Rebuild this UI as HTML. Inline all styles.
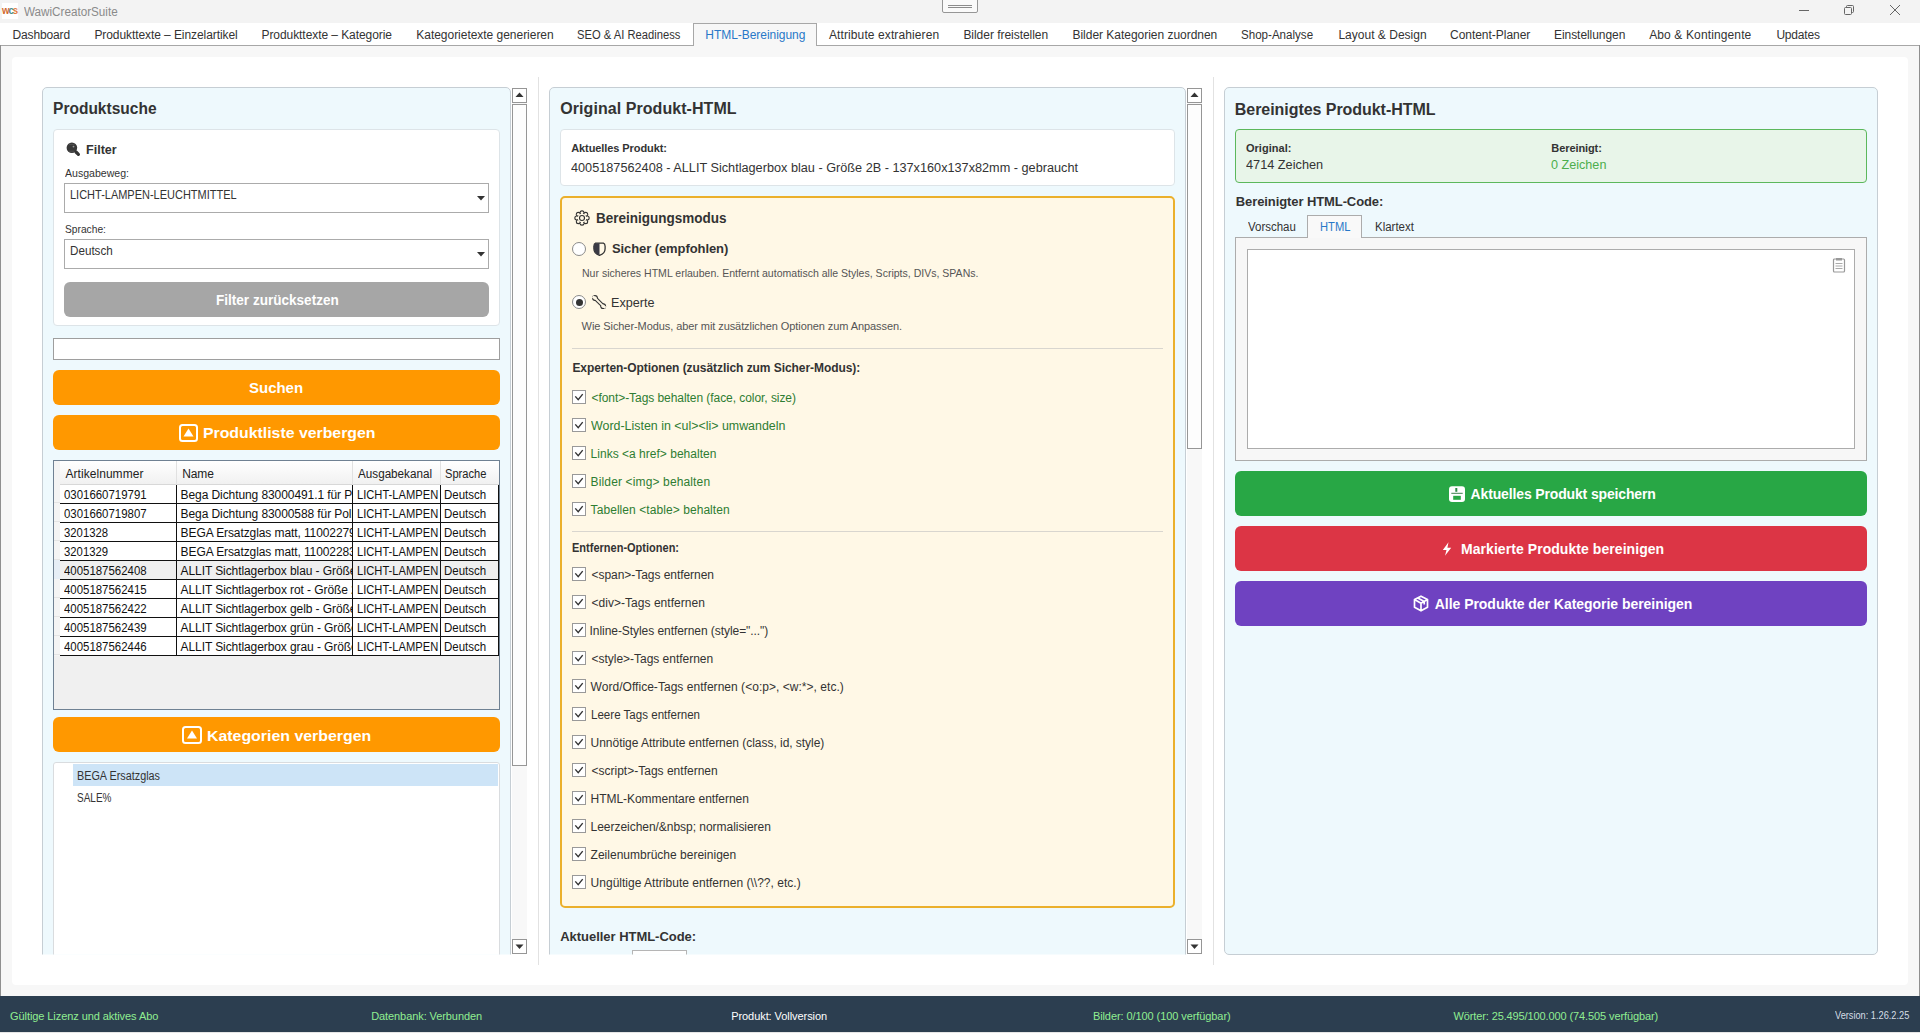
<!DOCTYPE html>
<html><head><meta charset="utf-8"><style>
html,body{margin:0;padding:0;width:1920px;height:1033px;overflow:hidden;background:#f3f3f3;font-family:'Liberation Sans', sans-serif;}
div,span,svg{position:absolute;box-sizing:border-box;}
.t{white-space:pre;}
</style></head><body>
<div style="left:0px;top:0px;width:1920px;height:23px;background:#f3f3f3"></div>
<div style="left:2px;top:3px;width:16px;height:16px;background:#fff"></div>
<span class="t" style="left:1.5px;top:2.5px;font-size:11px;line-height:14px;font-weight:700;letter-spacing:-1.2px;transform:scaleX(0.88);transform-origin:0 50%"><span style="position:static;color:#d2692e">w</span><span style="position:static;color:#4b8c8c">c</span><span style="position:static;color:#e27d3e">s</span></span>
<span class="t" style="left:24.00px;top:1.50px;font-size:12px;line-height:20px;font-weight:400;color:#8a8a8a;letter-spacing:0.000px;transform:scaleX(0.9733);transform-origin:0.00px 50%;">WawiCreatorSuite</span>
<div style="left:942px;top:-1px;width:36px;height:14px;border:1px solid #969696;background:#fafafa;border-radius:0 0 2px 2px"></div>
<div style="left:948px;top:5px;width:24px;height:1px;background:#8c8c8c"></div>
<div style="left:948px;top:7px;width:24px;height:1px;background:#8c8c8c"></div>
<div style="left:1799px;top:10px;width:10px;height:1px;background:#666"></div>
<svg style="left:1843px;top:4px" width="12" height="12" viewBox="0 0 12 12"><rect x="1.5" y="3.5" width="7" height="7" rx="1" fill="none" stroke="#666" stroke-width="1"/><path d="M3.5 3.5V2.5Q3.5 1.5 4.5 1.5H9.5Q10.5 1.5 10.5 2.5V7.5Q10.5 8.5 9.5 8.5H8.5" fill="none" stroke="#666" stroke-width="1"/></svg>
<svg style="left:1889px;top:4px" width="12" height="12" viewBox="0 0 12 12"><path d="M1 1L11 11M11 1L1 11" stroke="#666" stroke-width="1"/></svg>
<div style="left:0px;top:23px;width:1920px;height:22px;background:#fff"></div>
<div style="left:0px;top:45px;width:1920px;height:1px;background:#a7a7a7"></div>
<div style="left:693px;top:23px;width:124px;height:23px;background:#f7f7f7;border:1px solid #a7a7a7;border-bottom:none"></div>
<span class="t" style="left:12.50px;top:24.60px;font-size:12px;line-height:20px;font-weight:400;color:#333;letter-spacing:-0.141px;">Dashboard</span>
<span class="t" style="left:94.40px;top:24.60px;font-size:12px;line-height:20px;font-weight:400;color:#333;letter-spacing:-0.079px;">Produkttexte – Einzelartikel</span>
<span class="t" style="left:261.50px;top:24.60px;font-size:12px;line-height:20px;font-weight:400;color:#333;letter-spacing:-0.070px;">Produkttexte – Kategorie</span>
<span class="t" style="left:416.30px;top:24.60px;font-size:12px;line-height:20px;font-weight:400;color:#333;letter-spacing:-0.030px;">Kategorietexte generieren</span>
<span class="t" style="left:577.00px;top:24.60px;font-size:12px;line-height:20px;font-weight:400;color:#333;letter-spacing:0.000px;transform:scaleX(0.9337);transform-origin:0.00px 50%;">SEO &amp; AI Readiness</span>
<span class="t" style="left:705.30px;top:24.60px;font-size:12px;line-height:20px;font-weight:400;color:#2878c8;letter-spacing:-0.042px;">HTML-Bereinigung</span>
<span class="t" style="left:829.00px;top:24.60px;font-size:12px;line-height:20px;font-weight:400;color:#333;letter-spacing:0.101px;">Attribute extrahieren</span>
<span class="t" style="left:963.40px;top:24.60px;font-size:12px;line-height:20px;font-weight:400;color:#333;letter-spacing:-0.035px;">Bilder freistellen</span>
<span class="t" style="left:1072.50px;top:24.60px;font-size:12px;line-height:20px;font-weight:400;color:#333;letter-spacing:-0.026px;">Bilder Kategorien zuordnen</span>
<span class="t" style="left:1241.00px;top:24.60px;font-size:12px;line-height:20px;font-weight:400;color:#333;letter-spacing:0.000px;transform:scaleX(0.9648);transform-origin:0.00px 50%;">Shop-Analyse</span>
<span class="t" style="left:1338.40px;top:24.60px;font-size:12px;line-height:20px;font-weight:400;color:#333;letter-spacing:0.016px;">Layout &amp; Design</span>
<span class="t" style="left:1450.00px;top:24.60px;font-size:12px;line-height:20px;font-weight:400;color:#333;letter-spacing:-0.032px;">Content-Planer</span>
<span class="t" style="left:1554.00px;top:24.60px;font-size:12px;line-height:20px;font-weight:400;color:#333;letter-spacing:-0.057px;">Einstellungen</span>
<span class="t" style="left:1649.20px;top:24.60px;font-size:12px;line-height:20px;font-weight:400;color:#333;letter-spacing:0.125px;">Abo &amp; Kontingente</span>
<span class="t" style="left:1776.40px;top:24.60px;font-size:12px;line-height:20px;font-weight:400;color:#333;letter-spacing:-0.183px;">Updates</span>
<div style="left:0px;top:46px;width:1920px;height:950px;background:#f7f7f7"></div>
<div style="left:0px;top:45px;width:1px;height:951px;background:#8f8f8f"></div>
<div style="left:1919px;top:45px;width:1px;height:951px;background:#8f8f8f"></div>
<div style="left:12px;top:57px;width:1896px;height:928px;background:#fff;border-radius:4px"></div>
<div style="left:538px;top:77px;width:1px;height:888px;background:#e2e2e2"></div>
<div style="left:1213px;top:77px;width:1px;height:888px;background:#e2e2e2"></div>
<div style="left:0px;top:996px;width:1920px;height:36px;background:#2c3e50"></div>
<div style="left:0px;top:1032px;width:1920px;height:1px;background:#e6e6e6"></div>
<span class="t" style="left:10.00px;top:1006.20px;font-size:11px;line-height:20px;font-weight:400;color:#90ee90;letter-spacing:-0.073px;">Gültige Lizenz und aktives Abo</span>
<span class="t" style="left:371.20px;top:1006.20px;font-size:11px;line-height:20px;font-weight:400;color:#90ee90;letter-spacing:-0.085px;">Datenbank: Verbunden</span>
<span class="t" style="left:731.20px;top:1006.20px;font-size:11px;line-height:20px;font-weight:400;color:#ffffff;letter-spacing:-0.068px;">Produkt: Vollversion</span>
<span class="t" style="left:1092.90px;top:1006.20px;font-size:11px;line-height:20px;font-weight:400;color:#90ee90;letter-spacing:-0.081px;">Bilder: 0/100 (100 verfügbar)</span>
<span class="t" style="left:1453.40px;top:1006.20px;font-size:11px;line-height:20px;font-weight:400;color:#90ee90;letter-spacing:-0.109px;">Wörter: 25.495/100.000 (74.505 verfügbar)</span>
<span class="t" style="left:1835.00px;top:1005.50px;font-size:10px;line-height:20px;font-weight:400;color:#d5dde5;letter-spacing:0.000px;transform:scaleX(0.9216);transform-origin:0.00px 50%;">Version: 1.26.2.25</span>
<div style="left:0;top:0;width:1920px;height:1033px;clip-path:inset(57px 1382px 78.5px 12px)">
<div style="left:42px;top:87px;width:469px;height:1000px;background:#eef9fd;border:1px solid #c6ced4;border-radius:5px"></div>
<span class="t" style="left:52.50px;top:99.30px;font-size:16px;line-height:20px;font-weight:700;color:#333;letter-spacing:0.000px;transform:scaleX(0.9699);transform-origin:1.00px 50%;">Produktsuche</span>
<div style="left:53px;top:129px;width:447px;height:197px;background:#fff;border:1px solid #dde4e8;border-radius:4px"></div>
<svg style="left:65px;top:142px" width="16" height="16" viewBox="0 0 16 16"><circle cx="6.9" cy="5.8" r="5.3" fill="#383838"/><circle cx="8.5" cy="4.6" r="0.9" fill="#999"/><path d="M3.8 2.4H9.5M3.8 9.2H9.5" stroke="#555" stroke-width="0.8"/><path d="M11 10L13.4 12.4" stroke="#333" stroke-width="3.2" stroke-linecap="round"/></svg>
<span class="t" style="left:86.00px;top:140.10px;font-size:13px;line-height:20px;font-weight:700;color:#333;letter-spacing:0.000px;transform:scaleX(0.9677);transform-origin:0.00px 50%;">Filter</span>
<span class="t" style="left:64.60px;top:163.00px;font-size:11px;line-height:20px;font-weight:400;color:#333;letter-spacing:0.000px;transform:scaleX(0.9609);transform-origin:0.00px 50%;">Ausgabeweg:</span>
<div style="left:64px;top:183px;width:425px;height:30px;background:#fff;border:1px solid #ababab"></div>
<span class="t" style="left:69.60px;top:185.40px;font-size:12px;line-height:20px;font-weight:400;color:#333;letter-spacing:0.000px;transform:scaleX(0.9153);transform-origin:0.00px 50%;">LICHT-LAMPEN-LEUCHTMITTEL</span>
<svg style="left:477px;top:196px" width="8" height="5" viewBox="0 0 8 5"><path d="M0 0H8L4 4.5Z" fill="#333"/></svg>
<span class="t" style="left:64.60px;top:219.00px;font-size:11px;line-height:20px;font-weight:400;color:#333;letter-spacing:0.000px;transform:scaleX(0.9302);transform-origin:0.00px 50%;">Sprache:</span>
<div style="left:64px;top:239px;width:425px;height:30px;background:#fff;border:1px solid #ababab"></div>
<span class="t" style="left:69.60px;top:241.40px;font-size:12px;line-height:20px;font-weight:400;color:#333;letter-spacing:0.000px;transform:scaleX(0.9712);transform-origin:0.00px 50%;">Deutsch</span>
<svg style="left:477px;top:252px" width="8" height="5" viewBox="0 0 8 5"><path d="M0 0H8L4 4.5Z" fill="#333"/></svg>
<div style="left:64px;top:282px;width:425px;height:35px;background:#a6a6a6;border-radius:6px"></div>
<span class="t" style="left:215.90px;top:290.00px;font-size:14px;line-height:20px;font-weight:700;color:#fff;letter-spacing:0.000px;transform:scaleX(0.9678);transform-origin:0.00px 50%;">Filter zurücksetzen</span>
<div style="left:53px;top:338px;width:447px;height:22px;background:#fff;border:1px solid #9e9e9e"></div>
<div style="left:53px;top:370px;width:447px;height:35px;background:#ff9800;border-radius:6px"></div>
<span class="t" style="left:249.10px;top:378.40px;font-size:15px;line-height:20px;font-weight:700;color:#fff;letter-spacing:-0.043px;">Suchen</span>
<div style="left:53px;top:415px;width:447px;height:35px;background:#ff9800;border-radius:6px"></div>
<svg style="left:179px;top:424px" width="19" height="18" viewBox="0 0 19 18"><rect x="1" y="1" width="17" height="16" rx="2.5" fill="none" stroke="#fff" stroke-width="2"/><path d="M9.5 4.5L14.5 12.5H4.5Z" fill="#fff"/></svg>
<span class="t" style="left:203.40px;top:423.20px;font-size:15px;line-height:20px;font-weight:700;color:#fff;letter-spacing:0.000px;transform:scaleX(1.0560);transform-origin:1.00px 50%;">Produktliste verbergen</span>
<div style="left:53px;top:460px;width:447px;height:250px;background:#f0f0f0;border:1px solid #6f8193"></div>
<div style="left:54px;top:461px;width:6px;height:195px;background:#f4f4f4"></div>
<div style="left:60px;top:461px;width:439px;height:24px;background:linear-gradient(#ffffff,#f1f1f1);border-bottom:1px solid #d8d8d8"></div>
<div style="left:176px;top:461px;width:1px;height:24px;background:#e1e1e1"></div>
<div style="left:352px;top:461px;width:1px;height:24px;background:#e1e1e1"></div>
<div style="left:440px;top:461px;width:1px;height:24px;background:#e1e1e1"></div>
<span class="t" style="left:65.50px;top:463.50px;font-size:12px;line-height:20px;font-weight:400;color:#222;letter-spacing:0.046px;">Artikelnummer</span>
<span class="t" style="left:182.30px;top:463.50px;font-size:12px;line-height:20px;font-weight:400;color:#222;letter-spacing:-0.162px;">Name</span>
<span class="t" style="left:358.40px;top:463.50px;font-size:12px;line-height:20px;font-weight:400;color:#222;letter-spacing:0.000px;transform:scaleX(0.9735);transform-origin:0.00px 50%;">Ausgabekanal</span>
<span class="t" style="left:445.30px;top:463.50px;font-size:12px;line-height:20px;font-weight:400;color:#222;letter-spacing:0.000px;transform:scaleX(0.9262);transform-origin:0.00px 50%;">Sprache</span>
<div style="left:60px;top:485px;width:439px;height:18px;background:#fff"></div>
<div style="left:54px;top:502px;width:6px;height:1px;background:#e4e4e4"></div>
<div style="left:60px;top:503px;width:439px;height:1px;background:#111"></div>
<span class="t" style="left:63.50px;top:485.40px;font-size:12px;line-height:20px;font-weight:400;color:#111;letter-spacing:0.000px;transform:scaleX(0.9519);transform-origin:0.00px 50%;">0301660719791</span>
<span class="t" style="left:356.70px;top:485.40px;font-size:12px;line-height:20px;font-weight:400;color:#111;letter-spacing:0.000px;transform:scaleX(0.9298);transform-origin:0.00px 50%;">LICHT-LAMPEN</span>
<span class="t" style="left:443.80px;top:485.40px;font-size:12px;line-height:20px;font-weight:400;color:#111;letter-spacing:0.000px;transform:scaleX(0.9574);transform-origin:0.00px 50%;">Deutsch</span>
<div style="left:0;top:0;width:1920px;height:1033px;clip-path:inset(0 1568px 0 177px)">
<span class="t" style="left:180.60px;top:485.40px;font-size:12px;line-height:20px;font-weight:400;color:#111;letter-spacing:-0.086px;">Bega Dichtung 83000491.1 für Pollerleuchte</span>
</div>
<div style="left:60px;top:504px;width:439px;height:18px;background:#fff"></div>
<div style="left:54px;top:521px;width:6px;height:1px;background:#e4e4e4"></div>
<div style="left:60px;top:522px;width:439px;height:1px;background:#111"></div>
<span class="t" style="left:63.50px;top:504.40px;font-size:12px;line-height:20px;font-weight:400;color:#111;letter-spacing:0.000px;transform:scaleX(0.9519);transform-origin:0.00px 50%;">0301660719807</span>
<span class="t" style="left:356.70px;top:504.40px;font-size:12px;line-height:20px;font-weight:400;color:#111;letter-spacing:0.000px;transform:scaleX(0.9298);transform-origin:0.00px 50%;">LICHT-LAMPEN</span>
<span class="t" style="left:443.80px;top:504.40px;font-size:12px;line-height:20px;font-weight:400;color:#111;letter-spacing:0.000px;transform:scaleX(0.9574);transform-origin:0.00px 50%;">Deutsch</span>
<div style="left:0;top:0;width:1920px;height:1033px;clip-path:inset(0 1568px 0 177px)">
<span class="t" style="left:180.60px;top:504.40px;font-size:12px;line-height:20px;font-weight:400;color:#111;letter-spacing:-0.087px;">Bega Dichtung 83000588 für Pollerleuchte</span>
</div>
<div style="left:60px;top:523px;width:439px;height:18px;background:#fff"></div>
<div style="left:54px;top:540px;width:6px;height:1px;background:#e4e4e4"></div>
<div style="left:60px;top:541px;width:439px;height:1px;background:#111"></div>
<span class="t" style="left:63.50px;top:523.40px;font-size:12px;line-height:20px;font-weight:400;color:#111;letter-spacing:0.000px;transform:scaleX(0.9438);transform-origin:0.00px 50%;">3201328</span>
<span class="t" style="left:356.70px;top:523.40px;font-size:12px;line-height:20px;font-weight:400;color:#111;letter-spacing:0.000px;transform:scaleX(0.9298);transform-origin:0.00px 50%;">LICHT-LAMPEN</span>
<span class="t" style="left:443.80px;top:523.40px;font-size:12px;line-height:20px;font-weight:400;color:#111;letter-spacing:0.000px;transform:scaleX(0.9574);transform-origin:0.00px 50%;">Deutsch</span>
<div style="left:0;top:0;width:1920px;height:1033px;clip-path:inset(0 1568px 0 177px)">
<span class="t" style="left:180.60px;top:523.40px;font-size:12px;line-height:20px;font-weight:400;color:#111;letter-spacing:-0.093px;">BEGA Ersatzglas matt, 11002279</span>
</div>
<div style="left:60px;top:542px;width:439px;height:18px;background:#fff"></div>
<div style="left:54px;top:559px;width:6px;height:1px;background:#e4e4e4"></div>
<div style="left:60px;top:560px;width:439px;height:1px;background:#111"></div>
<span class="t" style="left:63.50px;top:542.40px;font-size:12px;line-height:20px;font-weight:400;color:#111;letter-spacing:0.000px;transform:scaleX(0.9438);transform-origin:0.00px 50%;">3201329</span>
<span class="t" style="left:356.70px;top:542.40px;font-size:12px;line-height:20px;font-weight:400;color:#111;letter-spacing:0.000px;transform:scaleX(0.9298);transform-origin:0.00px 50%;">LICHT-LAMPEN</span>
<span class="t" style="left:443.80px;top:542.40px;font-size:12px;line-height:20px;font-weight:400;color:#111;letter-spacing:0.000px;transform:scaleX(0.9574);transform-origin:0.00px 50%;">Deutsch</span>
<div style="left:0;top:0;width:1920px;height:1033px;clip-path:inset(0 1568px 0 177px)">
<span class="t" style="left:180.60px;top:542.40px;font-size:12px;line-height:20px;font-weight:400;color:#111;letter-spacing:-0.093px;">BEGA Ersatzglas matt, 11002283</span>
</div>
<div style="left:60px;top:561px;width:439px;height:18px;background:#efefef"></div>
<div style="left:54px;top:578px;width:6px;height:1px;background:#e4e4e4"></div>
<div style="left:60px;top:579px;width:439px;height:1px;background:#111"></div>
<span class="t" style="left:63.50px;top:561.40px;font-size:12px;line-height:20px;font-weight:400;color:#111;letter-spacing:0.000px;transform:scaleX(0.9519);transform-origin:0.00px 50%;">4005187562408</span>
<span class="t" style="left:356.70px;top:561.40px;font-size:12px;line-height:20px;font-weight:400;color:#111;letter-spacing:0.000px;transform:scaleX(0.9298);transform-origin:0.00px 50%;">LICHT-LAMPEN</span>
<span class="t" style="left:443.80px;top:561.40px;font-size:12px;line-height:20px;font-weight:400;color:#111;letter-spacing:0.000px;transform:scaleX(0.9574);transform-origin:0.00px 50%;">Deutsch</span>
<div style="left:0;top:0;width:1920px;height:1033px;clip-path:inset(0 1568px 0 177px)">
<span class="t" style="left:180.60px;top:561.40px;font-size:12px;line-height:20px;font-weight:400;color:#111;letter-spacing:-0.087px;">ALLIT Sichtlagerbox blau - Größe 2B</span>
</div>
<div style="left:60px;top:580px;width:439px;height:18px;background:#fff"></div>
<div style="left:54px;top:597px;width:6px;height:1px;background:#e4e4e4"></div>
<div style="left:60px;top:598px;width:439px;height:1px;background:#111"></div>
<span class="t" style="left:63.50px;top:580.40px;font-size:12px;line-height:20px;font-weight:400;color:#111;letter-spacing:0.000px;transform:scaleX(0.9519);transform-origin:0.00px 50%;">4005187562415</span>
<span class="t" style="left:356.70px;top:580.40px;font-size:12px;line-height:20px;font-weight:400;color:#111;letter-spacing:0.000px;transform:scaleX(0.9298);transform-origin:0.00px 50%;">LICHT-LAMPEN</span>
<span class="t" style="left:443.80px;top:580.40px;font-size:12px;line-height:20px;font-weight:400;color:#111;letter-spacing:0.000px;transform:scaleX(0.9574);transform-origin:0.00px 50%;">Deutsch</span>
<div style="left:0;top:0;width:1920px;height:1033px;clip-path:inset(0 1568px 0 177px)">
<span class="t" style="left:180.60px;top:580.40px;font-size:12px;line-height:20px;font-weight:400;color:#111;letter-spacing:-0.085px;">ALLIT Sichtlagerbox rot - Größe 2B</span>
</div>
<div style="left:60px;top:599px;width:439px;height:18px;background:#fff"></div>
<div style="left:54px;top:616px;width:6px;height:1px;background:#e4e4e4"></div>
<div style="left:60px;top:617px;width:439px;height:1px;background:#111"></div>
<span class="t" style="left:63.50px;top:599.40px;font-size:12px;line-height:20px;font-weight:400;color:#111;letter-spacing:0.000px;transform:scaleX(0.9519);transform-origin:0.00px 50%;">4005187562422</span>
<span class="t" style="left:356.70px;top:599.40px;font-size:12px;line-height:20px;font-weight:400;color:#111;letter-spacing:0.000px;transform:scaleX(0.9298);transform-origin:0.00px 50%;">LICHT-LAMPEN</span>
<span class="t" style="left:443.80px;top:599.40px;font-size:12px;line-height:20px;font-weight:400;color:#111;letter-spacing:0.000px;transform:scaleX(0.9574);transform-origin:0.00px 50%;">Deutsch</span>
<div style="left:0;top:0;width:1920px;height:1033px;clip-path:inset(0 1568px 0 177px)">
<span class="t" style="left:180.60px;top:599.40px;font-size:12px;line-height:20px;font-weight:400;color:#111;letter-spacing:-0.087px;">ALLIT Sichtlagerbox gelb - Größe 2B</span>
</div>
<div style="left:60px;top:618px;width:439px;height:18px;background:#fff"></div>
<div style="left:54px;top:635px;width:6px;height:1px;background:#e4e4e4"></div>
<div style="left:60px;top:636px;width:439px;height:1px;background:#111"></div>
<span class="t" style="left:63.50px;top:618.40px;font-size:12px;line-height:20px;font-weight:400;color:#111;letter-spacing:0.000px;transform:scaleX(0.9519);transform-origin:0.00px 50%;">4005187562439</span>
<span class="t" style="left:356.70px;top:618.40px;font-size:12px;line-height:20px;font-weight:400;color:#111;letter-spacing:0.000px;transform:scaleX(0.9298);transform-origin:0.00px 50%;">LICHT-LAMPEN</span>
<span class="t" style="left:443.80px;top:618.40px;font-size:12px;line-height:20px;font-weight:400;color:#111;letter-spacing:0.000px;transform:scaleX(0.9574);transform-origin:0.00px 50%;">Deutsch</span>
<div style="left:0;top:0;width:1920px;height:1033px;clip-path:inset(0 1568px 0 177px)">
<span class="t" style="left:180.60px;top:618.40px;font-size:12px;line-height:20px;font-weight:400;color:#111;letter-spacing:-0.087px;">ALLIT Sichtlagerbox grün - Größe 2B</span>
</div>
<div style="left:60px;top:637px;width:439px;height:18px;background:#fff"></div>
<div style="left:54px;top:654px;width:6px;height:1px;background:#e4e4e4"></div>
<div style="left:60px;top:655px;width:439px;height:1px;background:#111"></div>
<span class="t" style="left:63.50px;top:637.40px;font-size:12px;line-height:20px;font-weight:400;color:#111;letter-spacing:0.000px;transform:scaleX(0.9519);transform-origin:0.00px 50%;">4005187562446</span>
<span class="t" style="left:356.70px;top:637.40px;font-size:12px;line-height:20px;font-weight:400;color:#111;letter-spacing:0.000px;transform:scaleX(0.9298);transform-origin:0.00px 50%;">LICHT-LAMPEN</span>
<span class="t" style="left:443.80px;top:637.40px;font-size:12px;line-height:20px;font-weight:400;color:#111;letter-spacing:0.000px;transform:scaleX(0.9574);transform-origin:0.00px 50%;">Deutsch</span>
<div style="left:0;top:0;width:1920px;height:1033px;clip-path:inset(0 1568px 0 177px)">
<span class="t" style="left:180.60px;top:637.40px;font-size:12px;line-height:20px;font-weight:400;color:#111;letter-spacing:-0.087px;">ALLIT Sichtlagerbox grau - Größe 2B</span>
</div>
<div style="left:54px;top:560px;width:6px;height:19px;background:#e6eef6"></div>
<div style="left:176px;top:485px;width:1px;height:171px;background:#111"></div>
<div style="left:352px;top:485px;width:1px;height:171px;background:#111"></div>
<div style="left:440px;top:485px;width:1px;height:171px;background:#111"></div>
<div style="left:498px;top:485px;width:1px;height:171px;background:#111"></div>
<div style="left:53px;top:717px;width:447px;height:35px;background:#ff9800;border-radius:6px"></div>
<svg style="left:182px;top:726px" width="20" height="18" viewBox="0 0 20 18"><rect x="1" y="1" width="18" height="16" rx="2.5" fill="none" stroke="#fff" stroke-width="2"/><path d="M10 4.5L15 12.5H5Z" fill="#fff"/></svg>
<span class="t" style="left:207.20px;top:725.90px;font-size:15px;line-height:20px;font-weight:700;color:#fff;letter-spacing:0.000px;transform:scaleX(1.0599);transform-origin:1.00px 50%;">Kategorien verbergen</span>
<div style="left:53px;top:762px;width:447px;height:400px;background:#fff;border:1px solid #d9dcdf;border-radius:3px"></div>
<div style="left:73px;top:764px;width:425px;height:22px;background:#cde4f7"></div>
<span class="t" style="left:76.60px;top:765.60px;font-size:12px;line-height:20px;font-weight:400;color:#333;letter-spacing:0.000px;transform:scaleX(0.9018);transform-origin:0.00px 50%;">BEGA Ersatzglas</span>
<span class="t" style="left:76.60px;top:787.60px;font-size:12px;line-height:20px;font-weight:400;color:#333;letter-spacing:0.000px;transform:scaleX(0.8324);transform-origin:0.00px 50%;">SALE%</span>
</div>
<div style="left:512px;top:88px;width:15px;height:866px;background:#f8f8f8"></div>
<div style="left:512px;top:88px;width:15px;height:15px;background:#fff;border:1px solid #969696"></div>
<svg style="left:515px;top:92px" width="9" height="6" viewBox="0 0 9 6"><path d="M0.5 5H8.5L4.5 0.5Z" fill="#333"/></svg>
<div style="left:512px;top:104px;width:15px;height:662px;background:#fdfdfd;border:1px solid #969696"></div>
<div style="left:512px;top:939px;width:15px;height:15px;background:#fff;border:1px solid #969696"></div>
<svg style="left:515px;top:944px" width="9" height="6" viewBox="0 0 9 6"><path d="M0.5 0.5H8.5L4.5 5Z" fill="#333"/></svg>
<div style="left:0;top:0;width:1920px;height:1033px;clip-path:inset(57px 734px 78.5px 539px)">
<div style="left:549px;top:87px;width:637px;height:1000px;background:#eef9fd;border:1px solid #c6ced4;border-radius:5px"></div>
<span class="t" style="left:560.30px;top:99.20px;font-size:16px;line-height:20px;font-weight:700;color:#333;letter-spacing:0.059px;">Original Produkt-HTML</span>
<div style="left:560px;top:129px;width:615px;height:57px;background:#fff;border:1px solid #dde4e8;border-radius:4px"></div>
<span class="t" style="left:571.20px;top:138.20px;font-size:11px;line-height:20px;font-weight:700;color:#333;letter-spacing:-0.084px;">Aktuelles Produkt:</span>
<span class="t" style="left:571.20px;top:157.60px;font-size:12px;line-height:20px;font-weight:400;color:#333;letter-spacing:0.000px;transform:scaleX(1.0575);transform-origin:0.00px 50%;">4005187562408 - ALLIT Sichtlagerbox blau - Größe 2B - 137x160x137x82mm - gebraucht</span>
<div style="left:560px;top:196px;width:615px;height:712px;background:#fff8e6;border:2px solid #ebb02c;border-radius:5px"></div>
<svg style="left:574px;top:210px" width="16" height="16" viewBox="0 0 16 16"><circle cx="8" cy="8" r="5.4" fill="#333"/><circle cx="13.20" cy="8.00" r="2.5" fill="#333"/><circle cx="11.68" cy="11.68" r="2.5" fill="#333"/><circle cx="8.00" cy="13.20" r="2.5" fill="#333"/><circle cx="4.32" cy="11.68" r="2.5" fill="#333"/><circle cx="2.80" cy="8.00" r="2.5" fill="#333"/><circle cx="4.32" cy="4.32" r="2.5" fill="#333"/><circle cx="8.00" cy="2.80" r="2.5" fill="#333"/><circle cx="11.68" cy="4.32" r="2.5" fill="#333"/><circle cx="8" cy="8" r="4.3" fill="#fff8e6"/><circle cx="13.20" cy="8.00" r="1.4" fill="#fff8e6"/><circle cx="11.68" cy="11.68" r="1.4" fill="#fff8e6"/><circle cx="8.00" cy="13.20" r="1.4" fill="#fff8e6"/><circle cx="4.32" cy="11.68" r="1.4" fill="#fff8e6"/><circle cx="2.80" cy="8.00" r="1.4" fill="#fff8e6"/><circle cx="4.32" cy="4.32" r="1.4" fill="#fff8e6"/><circle cx="8.00" cy="2.80" r="1.4" fill="#fff8e6"/><circle cx="11.68" cy="4.32" r="1.4" fill="#fff8e6"/><circle cx="8" cy="8" r="2.5" fill="none" stroke="#333" stroke-width="1.1"/></svg>
<span class="t" style="left:595.90px;top:208.20px;font-size:14px;line-height:20px;font-weight:700;color:#333;letter-spacing:0.000px;transform:scaleX(0.9634);transform-origin:0.00px 50%;">Bereinigungsmodus</span>
<div style="left:572px;top:242px;width:14px;height:14px;background:#fff;border:1px solid #8a8a8a;border-radius:50%"></div>
<svg style="left:593px;top:242px" width="13" height="14" viewBox="0 0 13 14"><path d="M2.6 1.2H10.4Q12 1.8 12.1 4.2V6.8C12.1 10 9.6 12.4 6.5 13.3C3.4 12.4 0.9 10 0.9 6.8V4.2Q1 1.8 2.6 1.2Z" fill="none" stroke="#333" stroke-width="1.3"/><path d="M6.5 1.2H2.6Q1 1.8 0.9 4.2V6.8C0.9 10 3.4 12.4 6.5 13.3Z" fill="#3a3a44"/></svg>
<span class="t" style="left:612.00px;top:238.90px;font-size:13px;line-height:20px;font-weight:700;color:#333;letter-spacing:-0.089px;">Sicher (empfohlen)</span>
<span class="t" style="left:581.60px;top:263.10px;font-size:11px;line-height:20px;font-weight:400;color:#555;letter-spacing:0.000px;transform:scaleX(0.9579);transform-origin:0.00px 50%;">Nur sicheres HTML erlauben. Entfernt automatisch alle Styles, Scripts, DIVs, SPANs.</span>
<div style="left:572px;top:295px;width:14px;height:14px;background:#fff;border:1px solid #8a8a8a;border-radius:50%"></div>
<div style="left:575.5px;top:298.5px;width:7px;height:7px;background:#333;border-radius:50%"></div>
<svg style="left:591px;top:294px" width="16" height="16" viewBox="0 0 16 16"><g fill="#333"><circle cx="4" cy="4" r="2.9"/><circle cx="12.2" cy="12.2" r="2.9"/></g><path d="M4 4L12.2 12.2" stroke="#333" stroke-width="4"/><g fill="#fff8e6"><circle cx="4" cy="4" r="1.8"/><circle cx="12.2" cy="12.2" r="1.8"/></g><path d="M4 4L12.2 12.2" stroke="#fff8e6" stroke-width="1.9"/><path d="M0.8 3.2L2.6 1.4L4.2 3L2.4 4.8Z M15.4 13L13.6 14.8L12 13.2L13.8 11.4Z" fill="#fff8e6"/></svg>
<span class="t" style="left:611.00px;top:292.70px;font-size:13px;line-height:20px;font-weight:400;color:#333;letter-spacing:0.000px;transform:scaleX(0.9685);transform-origin:1.00px 50%;">Experte</span>
<span class="t" style="left:581.60px;top:316.00px;font-size:11px;line-height:20px;font-weight:400;color:#555;letter-spacing:-0.079px;">Wie Sicher-Modus, aber mit zusätzlichen Optionen zum Anpassen.</span>
<div style="left:572px;top:348px;width:591px;height:1px;background:#d9d6cf"></div>
<span class="t" style="left:572.40px;top:357.50px;font-size:12px;line-height:20px;font-weight:700;color:#333;letter-spacing:-0.059px;">Experten-Optionen (zusätzlich zum Sicher-Modus):</span>
<svg style="left:572px;top:390px" width="14" height="14" viewBox="0 0 14 14"><rect x="0.5" y="0.5" width="13" height="13" fill="#fff" stroke="#999"/><path d="M3.3 6.4L6.2 9.6L10.7 4.1" fill="none" stroke="#333" stroke-width="1.4"/></svg>
<span class="t" style="left:591.50px;top:388.00px;font-size:12px;line-height:20px;font-weight:400;color:#2e7d32;letter-spacing:-0.059px;">&lt;font&gt;-Tags behalten (face, color, size)</span>
<svg style="left:572px;top:418px" width="14" height="14" viewBox="0 0 14 14"><rect x="0.5" y="0.5" width="13" height="13" fill="#fff" stroke="#999"/><path d="M3.3 6.4L6.2 9.6L10.7 4.1" fill="none" stroke="#333" stroke-width="1.4"/></svg>
<span class="t" style="left:590.60px;top:416.00px;font-size:12px;line-height:20px;font-weight:400;color:#2e7d32;letter-spacing:0.000px;transform:scaleX(1.0347);transform-origin:0.00px 50%;">Word-Listen in &lt;ul&gt;&lt;li&gt; umwandeln</span>
<svg style="left:572px;top:446px" width="14" height="14" viewBox="0 0 14 14"><rect x="0.5" y="0.5" width="13" height="13" fill="#fff" stroke="#999"/><path d="M3.3 6.4L6.2 9.6L10.7 4.1" fill="none" stroke="#333" stroke-width="1.4"/></svg>
<span class="t" style="left:590.60px;top:444.00px;font-size:12px;line-height:20px;font-weight:400;color:#2e7d32;letter-spacing:0.016px;">Links &lt;a href&gt; behalten</span>
<svg style="left:572px;top:474px" width="14" height="14" viewBox="0 0 14 14"><rect x="0.5" y="0.5" width="13" height="13" fill="#fff" stroke="#999"/><path d="M3.3 6.4L6.2 9.6L10.7 4.1" fill="none" stroke="#333" stroke-width="1.4"/></svg>
<span class="t" style="left:590.60px;top:472.00px;font-size:12px;line-height:20px;font-weight:400;color:#2e7d32;letter-spacing:0.137px;">Bilder &lt;img&gt; behalten</span>
<svg style="left:572px;top:502px" width="14" height="14" viewBox="0 0 14 14"><rect x="0.5" y="0.5" width="13" height="13" fill="#fff" stroke="#999"/><path d="M3.3 6.4L6.2 9.6L10.7 4.1" fill="none" stroke="#333" stroke-width="1.4"/></svg>
<span class="t" style="left:590.60px;top:500.00px;font-size:12px;line-height:20px;font-weight:400;color:#2e7d32;letter-spacing:0.068px;">Tabellen &lt;table&gt; behalten</span>
<div style="left:572px;top:531px;width:591px;height:1px;background:#d9d6cf"></div>
<span class="t" style="left:572.40px;top:538.20px;font-size:12px;line-height:20px;font-weight:700;color:#333;letter-spacing:0.000px;transform:scaleX(0.9174);transform-origin:0.00px 50%;">Entfernen-Optionen:</span>
<svg style="left:572px;top:567px" width="14" height="14" viewBox="0 0 14 14"><rect x="0.5" y="0.5" width="13" height="13" fill="#fff" stroke="#999"/><path d="M3.3 6.4L6.2 9.6L10.7 4.1" fill="none" stroke="#333" stroke-width="1.4"/></svg>
<span class="t" style="left:591.50px;top:565.00px;font-size:12px;line-height:20px;font-weight:400;color:#333;letter-spacing:-0.047px;">&lt;span&gt;-Tags entfernen</span>
<svg style="left:572px;top:595px" width="14" height="14" viewBox="0 0 14 14"><rect x="0.5" y="0.5" width="13" height="13" fill="#fff" stroke="#999"/><path d="M3.3 6.4L6.2 9.6L10.7 4.1" fill="none" stroke="#333" stroke-width="1.4"/></svg>
<span class="t" style="left:591.50px;top:593.00px;font-size:12px;line-height:20px;font-weight:400;color:#333;letter-spacing:0.033px;">&lt;div&gt;-Tags entfernen</span>
<svg style="left:572px;top:623px" width="14" height="14" viewBox="0 0 14 14"><rect x="0.5" y="0.5" width="13" height="13" fill="#fff" stroke="#999"/><path d="M3.3 6.4L6.2 9.6L10.7 4.1" fill="none" stroke="#333" stroke-width="1.4"/></svg>
<span class="t" style="left:589.60px;top:621.00px;font-size:12px;line-height:20px;font-weight:400;color:#333;letter-spacing:-0.062px;">Inline-Styles entfernen (style=&quot;...&quot;)</span>
<svg style="left:572px;top:651px" width="14" height="14" viewBox="0 0 14 14"><rect x="0.5" y="0.5" width="13" height="13" fill="#fff" stroke="#999"/><path d="M3.3 6.4L6.2 9.6L10.7 4.1" fill="none" stroke="#333" stroke-width="1.4"/></svg>
<span class="t" style="left:591.50px;top:649.00px;font-size:12px;line-height:20px;font-weight:400;color:#333;letter-spacing:-0.019px;">&lt;style&gt;-Tags entfernen</span>
<svg style="left:572px;top:679px" width="14" height="14" viewBox="0 0 14 14"><rect x="0.5" y="0.5" width="13" height="13" fill="#fff" stroke="#999"/><path d="M3.3 6.4L6.2 9.6L10.7 4.1" fill="none" stroke="#333" stroke-width="1.4"/></svg>
<span class="t" style="left:590.60px;top:677.00px;font-size:12px;line-height:20px;font-weight:400;color:#333;letter-spacing:0.033px;">Word/Office-Tags entfernen (&lt;o:p&gt;, &lt;w:*&gt;, etc.)</span>
<svg style="left:572px;top:707px" width="14" height="14" viewBox="0 0 14 14"><rect x="0.5" y="0.5" width="13" height="13" fill="#fff" stroke="#999"/><path d="M3.3 6.4L6.2 9.6L10.7 4.1" fill="none" stroke="#333" stroke-width="1.4"/></svg>
<span class="t" style="left:590.60px;top:705.00px;font-size:12px;line-height:20px;font-weight:400;color:#333;letter-spacing:0.000px;transform:scaleX(0.9633);transform-origin:0.00px 50%;">Leere Tags entfernen</span>
<svg style="left:572px;top:735px" width="14" height="14" viewBox="0 0 14 14"><rect x="0.5" y="0.5" width="13" height="13" fill="#fff" stroke="#999"/><path d="M3.3 6.4L6.2 9.6L10.7 4.1" fill="none" stroke="#333" stroke-width="1.4"/></svg>
<span class="t" style="left:590.60px;top:733.00px;font-size:12px;line-height:20px;font-weight:400;color:#333;letter-spacing:-0.037px;">Unnötige Attribute entfernen (class, id, style)</span>
<svg style="left:572px;top:763px" width="14" height="14" viewBox="0 0 14 14"><rect x="0.5" y="0.5" width="13" height="13" fill="#fff" stroke="#999"/><path d="M3.3 6.4L6.2 9.6L10.7 4.1" fill="none" stroke="#333" stroke-width="1.4"/></svg>
<span class="t" style="left:591.50px;top:761.00px;font-size:12px;line-height:20px;font-weight:400;color:#333;letter-spacing:0.005px;">&lt;script&gt;-Tags entfernen</span>
<svg style="left:572px;top:791px" width="14" height="14" viewBox="0 0 14 14"><rect x="0.5" y="0.5" width="13" height="13" fill="#fff" stroke="#999"/><path d="M3.3 6.4L6.2 9.6L10.7 4.1" fill="none" stroke="#333" stroke-width="1.4"/></svg>
<span class="t" style="left:590.60px;top:789.00px;font-size:12px;line-height:20px;font-weight:400;color:#333;letter-spacing:-0.047px;">HTML-Kommentare entfernen</span>
<svg style="left:572px;top:819px" width="14" height="14" viewBox="0 0 14 14"><rect x="0.5" y="0.5" width="13" height="13" fill="#fff" stroke="#999"/><path d="M3.3 6.4L6.2 9.6L10.7 4.1" fill="none" stroke="#333" stroke-width="1.4"/></svg>
<span class="t" style="left:590.60px;top:817.00px;font-size:12px;line-height:20px;font-weight:400;color:#333;letter-spacing:-0.037px;">Leerzeichen/&amp;nbsp; normalisieren</span>
<svg style="left:572px;top:847px" width="14" height="14" viewBox="0 0 14 14"><rect x="0.5" y="0.5" width="13" height="13" fill="#fff" stroke="#999"/><path d="M3.3 6.4L6.2 9.6L10.7 4.1" fill="none" stroke="#333" stroke-width="1.4"/></svg>
<span class="t" style="left:590.60px;top:845.00px;font-size:12px;line-height:20px;font-weight:400;color:#333;letter-spacing:0.006px;">Zeilenumbrüche bereinigen</span>
<svg style="left:572px;top:875px" width="14" height="14" viewBox="0 0 14 14"><rect x="0.5" y="0.5" width="13" height="13" fill="#fff" stroke="#999"/><path d="M3.3 6.4L6.2 9.6L10.7 4.1" fill="none" stroke="#333" stroke-width="1.4"/></svg>
<span class="t" style="left:590.60px;top:873.00px;font-size:12px;line-height:20px;font-weight:400;color:#333;letter-spacing:0.014px;">Ungültige Attribute entfernen (\\??, etc.)</span>
<span class="t" style="left:560.20px;top:926.50px;font-size:13px;line-height:20px;font-weight:700;color:#333;letter-spacing:-0.030px;">Aktueller HTML-Code:</span>
<div style="left:632px;top:950px;width:55px;height:20px;background:#fff;border:1px solid #b5b5b5"></div>
</div>
<div style="left:1187px;top:88px;width:15px;height:866px;background:#f8f8f8"></div>
<div style="left:1187px;top:88px;width:15px;height:15px;background:#fff;border:1px solid #969696"></div>
<svg style="left:1190px;top:92px" width="9" height="6" viewBox="0 0 9 6"><path d="M0.5 5H8.5L4.5 0.5Z" fill="#333"/></svg>
<div style="left:1187px;top:104px;width:15px;height:345px;background:#fdfdfd;border:1px solid #969696"></div>
<div style="left:1187px;top:939px;width:15px;height:15px;background:#fff;border:1px solid #969696"></div>
<svg style="left:1190px;top:944px" width="9" height="6" viewBox="0 0 9 6"><path d="M0.5 0.5H8.5L4.5 5Z" fill="#333"/></svg>
<div style="left:1224px;top:87px;width:654px;height:868px;background:#eef9fd;border:1px solid #c6ced4;border-radius:5px"></div>
<span class="t" style="left:1234.80px;top:99.50px;font-size:16px;line-height:20px;font-weight:700;color:#333;letter-spacing:-0.049px;">Bereinigtes Produkt-HTML</span>
<div style="left:1235px;top:129px;width:632px;height:54px;background:#e8f5e9;border:1px solid #5cb85c;border-radius:4px"></div>
<span class="t" style="left:1245.90px;top:138.00px;font-size:11px;line-height:20px;font-weight:700;color:#333;letter-spacing:0.042px;">Original:</span>
<span class="t" style="left:1245.90px;top:154.80px;font-size:12px;line-height:20px;font-weight:400;color:#333;letter-spacing:0.000px;transform:scaleX(1.0604);transform-origin:0.00px 50%;">4714 Zeichen</span>
<span class="t" style="left:1551.30px;top:138.00px;font-size:11px;line-height:20px;font-weight:700;color:#333;letter-spacing:-0.086px;">Bereinigt:</span>
<span class="t" style="left:1551.30px;top:154.80px;font-size:12px;line-height:20px;font-weight:400;color:#4cae4c;letter-spacing:0.000px;transform:scaleX(1.0514);transform-origin:0.00px 50%;">0 Zeichen</span>
<span class="t" style="left:1235.80px;top:192.00px;font-size:13px;line-height:20px;font-weight:700;color:#333;letter-spacing:-0.094px;">Bereinigter HTML-Code:</span>
<div style="left:1235px;top:237px;width:632px;height:224px;background:#f7f7f7;border:1px solid #acacac"></div>
<div style="left:1307px;top:215px;width:55px;height:23px;background:#f9f9f9;border:1px solid #acacac;border-bottom:none"></div>
<span class="t" style="left:1247.50px;top:216.80px;font-size:12px;line-height:20px;font-weight:400;color:#333;letter-spacing:0.000px;transform:scaleX(0.9563);transform-origin:0.00px 50%;">Vorschau</span>
<span class="t" style="left:1319.50px;top:216.80px;font-size:12px;line-height:20px;font-weight:400;color:#2878c8;letter-spacing:0.000px;transform:scaleX(0.9305);transform-origin:0.00px 50%;">HTML</span>
<span class="t" style="left:1374.50px;top:216.80px;font-size:12px;line-height:20px;font-weight:400;color:#333;letter-spacing:0.000px;transform:scaleX(0.9553);transform-origin:0.00px 50%;">Klartext</span>
<div style="left:1247px;top:249px;width:608px;height:200px;background:#fff;border:1px solid #acacac"></div>
<svg style="left:1832px;top:257px" width="14" height="16" viewBox="0 0 14 16"><rect x="1.5" y="2" width="11" height="13" rx="1" fill="none" stroke="#999" stroke-width="1.2"/><rect x="4" y="1" width="6" height="2.5" fill="#999"/><path d="M3.5 6.5H10.5M3.5 9H10.5M3.5 11.5H10.5" stroke="#aaa" stroke-width="1"/></svg>
<div style="left:1235px;top:471px;width:632px;height:45px;background:#28a745;border-radius:6px"></div>
<svg style="left:1448px;top:486px" width="18" height="16" viewBox="0 0 18 16"><rect x="1" y="0.3" width="16" height="15.6" rx="3" fill="#fff"/><rect x="7.3" y="2" width="2" height="3.8" fill="#2e8b45"/><rect x="3.3" y="6.8" width="11.4" height="1" fill="#3c7f4c"/><rect x="5.2" y="9.8" width="7.6" height="4" fill="#28a745"/></svg>
<span class="t" style="left:1470.60px;top:484.00px;font-size:14px;line-height:20px;font-weight:700;color:#fff;letter-spacing:-0.146px;">Aktuelles Produkt speichern</span>
<div style="left:1235px;top:526px;width:632px;height:45px;background:#dc3545;border-radius:6px"></div>
<svg style="left:1442px;top:542px" width="10" height="14" viewBox="0 0 10 14"><path d="M6.5 0.3L0.8 8H4.5L3 13.7L9.2 5.8H5.4Z" fill="#fff"/></svg>
<span class="t" style="left:1461.00px;top:539.00px;font-size:14px;line-height:20px;font-weight:700;color:#fff;letter-spacing:0.059px;">Markierte Produkte bereinigen</span>
<div style="left:1235px;top:581px;width:632px;height:45px;background:#6f42c1;border-radius:6px"></div>
<svg style="left:1413px;top:595px" width="16" height="17" viewBox="0 0 16 17"><path d="M8 1.2L14.5 4.6V12.2L8 15.8L1.5 12.2V4.6Z M1.5 4.6L8 8.2L14.5 4.6 M8 8.2V15.8 M4.8 2.9L11.2 6.4V9.5" fill="none" stroke="#fff" stroke-width="1.7" stroke-linejoin="round"/></svg>
<span class="t" style="left:1434.80px;top:594.00px;font-size:14px;line-height:20px;font-weight:700;color:#fff;letter-spacing:-0.041px;">Alle Produkte der Kategorie bereinigen</span>
</body></html>
